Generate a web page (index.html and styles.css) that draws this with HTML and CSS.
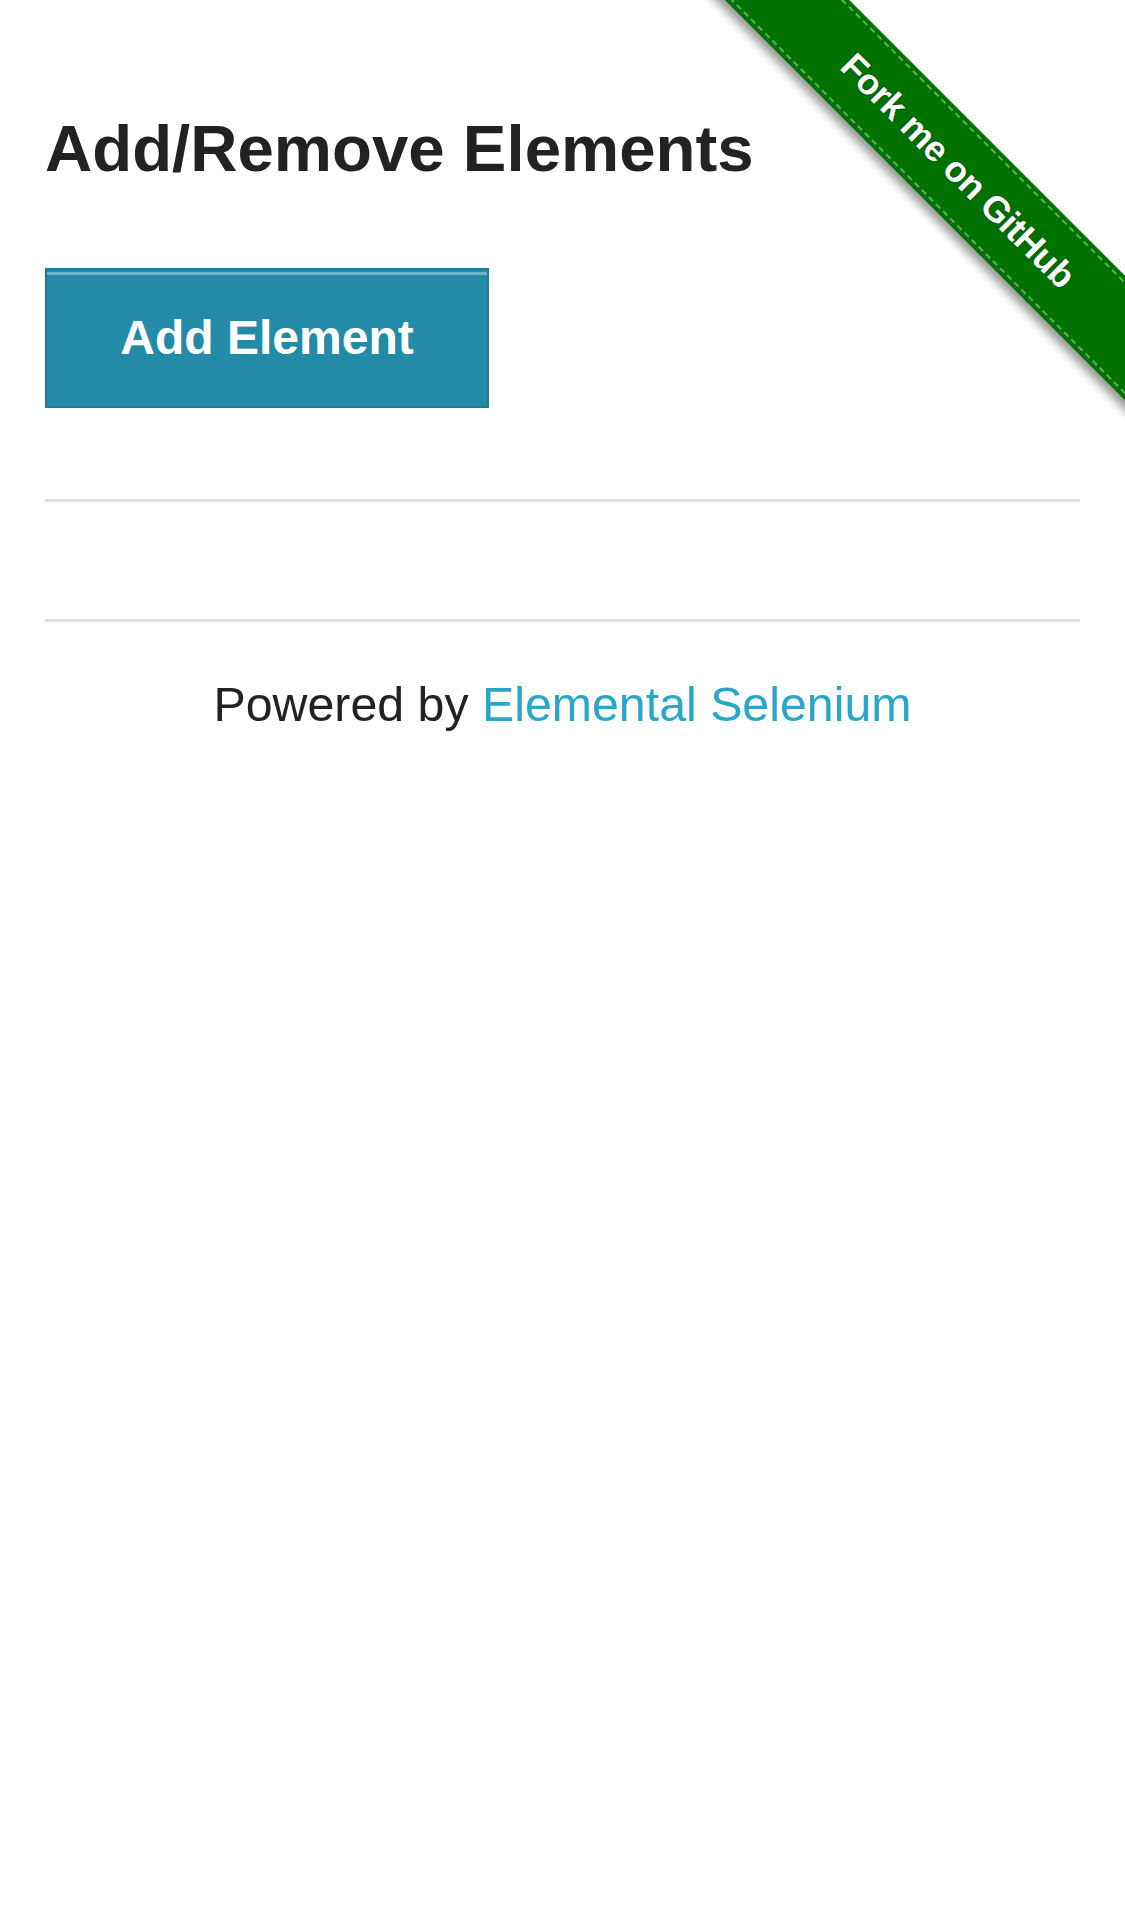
FILE: index.html
```html
<!DOCTYPE html>
<html lang="en">
<head>
<meta charset="utf-8">
<title>The Internet</title>
<link rel="stylesheet" href="styles.css">
</head>
<body>
<div class="ribbon-wrap">
  <div class="ribbon"><span class="ribbon-text">Fork me on GitHub</span></div>
</div>
<main class="page">
  <div class="example">
    <h3 class="title">Add/Remove Elements</h3>
    <button class="add-btn" type="button">Add Element</button>
    <div class="elements"></div>
  </div>
  <hr class="rule rule-top">
  <footer class="footer">
    <hr class="rule">
    <div class="powered">Powered by <a class="es-link" href="#">Elemental Selenium</a></div>
  </footer>
</main>
</body>
</html>
```

FILE: styles.css
```css
html, body {
  margin: 0;
  padding: 0;
  background: #ffffff;
}

body {
  font-family: "Liberation Sans", Arial, Helvetica, sans-serif;
  color: #222222;
  position: relative;
  width: 1125px;
  min-height: 1905px;
  overflow: hidden;
}

.page {
  padding: 0 45px;
}

.example {
  display: flex;
  flex-direction: column;
  align-items: flex-start;
}

.title {
  margin: 110px 0 80px 0;
  font-size: 65.4px;
  line-height: 78px;
  font-weight: bold;
  color: #222222;
}

.add-btn {
  box-sizing: border-box;
  width: 444px;
  height: 140px;
  margin: 0;
  padding: 0;
  background: #238aa8;
  border: 2px solid #1f7b97;
  box-shadow: inset 0 2px 0 #238aa8, inset 0 5px 0 #6fb3c8;
  color: #ffffff;
  font-family: "Liberation Sans", Arial, sans-serif;
  font-weight: bold;
  font-size: 48px;
  line-height: 136px;
  text-align: center;
  cursor: pointer;
}

.elements {
  height: 91px;
}

.rule {
  border: none;
  height: 3px;
  background: #dddddd;
  margin: 0;
}

.rule-top {
  margin-bottom: 117px;
}

.footer {
  display: block;
}

.powered {
  margin-top: 54px;
  text-align: center;
  font-size: 48.3px;
  line-height: 57.6px;
  color: #222222;
}

.es-link {
  color: #2ba6cb;
  text-decoration: none;
}

/* GitHub ribbon */
.ribbon-wrap {
  position: absolute;
  top: 0;
  right: 0;
  width: 447px;
  height: 447px;
  overflow: hidden;
  z-index: 5;
}

.ribbon {
  position: absolute;
  left: -43px;
  top: 123.5px;
  width: 640px;
  height: 88px;
  background: #007200;
  transform: rotate(45deg);
  box-shadow: 0 7px 10px rgba(0, 0, 0, 0.4);
  display: flex;
  align-items: center;
  justify-content: center;
}

.ribbon::before {
  content: "";
  position: absolute;
  left: 0;
  right: 0;
  top: 4px;
  bottom: 4px;
  border-top: 2px dashed rgba(255, 255, 255, 0.4);
  border-bottom: 2px dashed rgba(255, 255, 255, 0.4);
}

.ribbon-text {
  position: relative;
  color: #ffffff;
  font-family: "Liberation Sans", Arial, sans-serif;
  font-weight: bold;
  font-size: 36px;
  letter-spacing: -0.6px;
  text-shadow: 0 0 2px rgba(0, 0, 0, 0.6);
  margin-left: 8px;
}
```
